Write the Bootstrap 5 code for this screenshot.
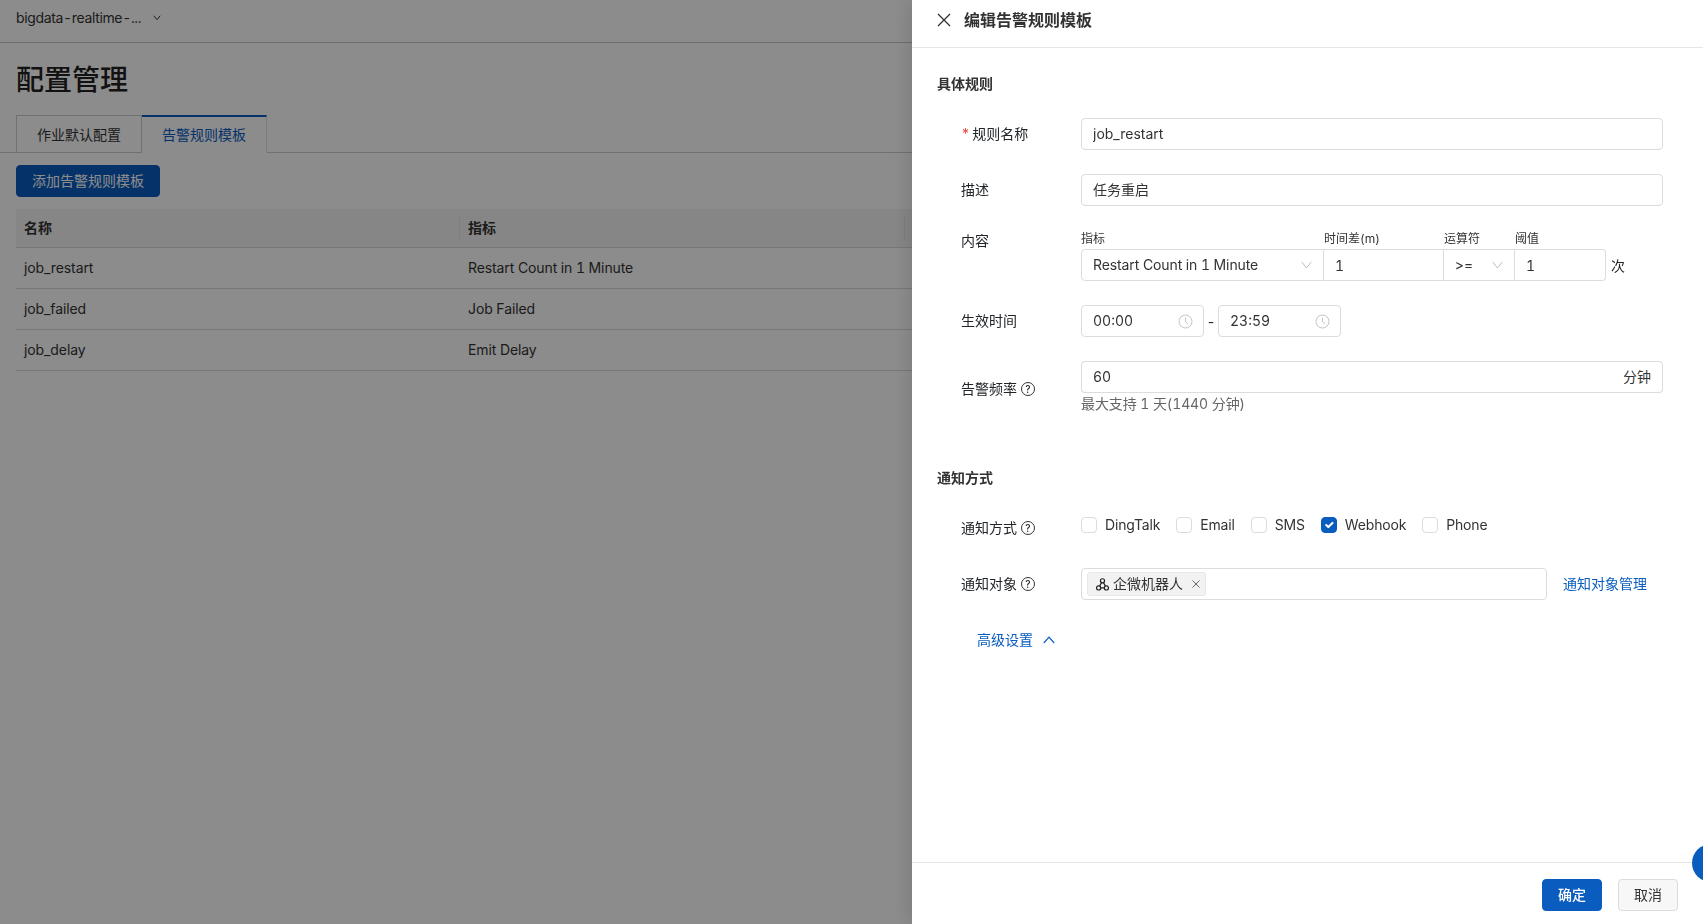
<!DOCTYPE html>
<html lang="zh">
<head>
<meta charset="utf-8">
<title>配置管理</title>
<link href="https://cdn.jsdelivr.net/npm/bootstrap@5.3.0/dist/css/bootstrap.min.css" rel="stylesheet">
<style>
html,body{height:100%;overflow:hidden}
body{font-family:Inter,"Noto Sans CJK SC",sans-serif;font-size:14px;color:#333;background:#fff;font-variant-numeric:tabular-nums}
.top-strip{height:43px;border-bottom:1px solid #c9c9c9;padding:7px 16px 0;line-height:22px}
.top-strip span{letter-spacing:-.35px}
.top-chev{margin:8px 0 0 12px}
.page-title{font-size:28px;line-height:40px;font-weight:500;margin:17px 16px 15px;color:#222}
.tab-strip{margin:0 0 12px;padding:0 0 0 16px;height:38px;border-bottom:1px solid #ccc;flex-wrap:nowrap}
.tab-strip .nav-link{height:38px;width:126px;padding:0;line-height:37px;text-align:center;border:1px solid #ccc;border-radius:0;color:#333;background:#fff;margin:0}
.tab-strip .nav-link.active{width:125px;border-top:2px solid #0a5cbf;border-bottom-color:#fff;color:#0a5cbf;border-left:0;line-height:35px}
.add-btn{display:block;margin-left:16px;height:32px;width:144px;padding:0;font-size:14px;line-height:30px;background:#0a5cbf;border-color:#0a5cbf;border-radius:4px}
.rule-table{margin:12px 0 0 16px;width:1687px;table-layout:fixed;--bs-table-color:#333;--bs-table-border-color:#d9d9d9}
.rule-table th{background:#f4f4f4;height:38px;padding:7px 0 8px 0;font-weight:600;border-bottom:1px solid #d9d9d9}
.th-inner{display:block;line-height:22px;padding-left:8px;border-right:1px solid #e6e6e6}
.rule-table td{height:41px;padding:0 8px;vertical-align:middle;border-bottom:1px solid #d9d9d9;letter-spacing:-.1px}
.page-scrim{position:fixed;inset:0;background:rgba(0,0,0,.45);z-index:1040}
.drawer{--bs-offcanvas-width:791px;box-shadow:-6px 0 16px rgba(0,0,0,.1);border-left:0!important}
.drawer-head{height:48px;padding:0 25px 7px;border-bottom:1px solid #e5e5e5;justify-content:flex-start;gap:13px}
.drawer-title{font-size:16px;line-height:24px;font-weight:600;color:#333;margin:0}
.drawer-x{width:14px;height:14px;display:block;flex:none}
.drawer-main{padding:25px 40px 0 25px;flex:1 1 auto;overflow:hidden}
.sec-title{font-size:14px;font-weight:600;line-height:22px;margin:0 0 23px;color:#333}
.form-line{display:flex;align-items:center;margin-bottom:24px;padding-left:24px}
.line-label{width:120px;flex:none;line-height:22px;display:flex;align-items:center;gap:4px}
.req-star{color:#e8453c;margin-right:-1.5px}
.hint-dot{width:14px;height:14px;border:1px solid #333;border-radius:50%;font-size:10px;line-height:12px;text-align:center;font-weight:500;flex:none}
.field-ctl{height:32px;padding:0 11px;font-size:14px;color:#333;border:1px solid #dcdcdc;border-radius:4px;background-color:#fff;box-shadow:none!important;line-height:30px;font-variant-numeric:tabular-nums}
input.top-input{padding-bottom:1px}
input.cn-input{padding-bottom:3px}
.field-wide{width:582px;flex:none}
.combo-head{display:flex;font-size:12px;line-height:16px;color:#333;height:18px}
.w-a{width:243px}.w-b{width:120px}.w-c{width:71px}.w-d{width:91px}
.combo-row{display:flex;align-items:center}
.combo-row .field-ctl{flex:none;border-radius:0;border-left:0}
.combo-row .field-ctl:first-child{border-radius:4px 0 0 4px;border-left:1px solid #dcdcdc}
.combo-row .field-ctl:nth-child(4){border-radius:0 4px 4px 0}
.field-pick{appearance:none;padding-right:26px;background-repeat:no-repeat;background-position:right 11px center;background-size:11px 8px;letter-spacing:-.1px;background-image:url("data:image/svg+xml,%3Csvg xmlns='http://www.w3.org/2000/svg' viewBox='0 0 11 8'%3E%3Cpath d='M.6.8 5.5 7 10.4.8' fill='none' stroke='%23bdbdbd' stroke-width='1'/%3E%3C/svg%3E")}
.combo-unit{margin-left:5px}
.time-box{width:123px;display:flex;align-items:center;justify-content:space-between;padding-right:10px}
.time-dash{width:14px;text-align:center}
.unit-addon{background:#fff;border:1px solid #dcdcdc;border-left:0;border-radius:0 4px 4px 0;padding:0 11px 2px 0;font-size:14px;color:#333}
.hint-line{color:#666;line-height:22px;height:24px;letter-spacing:-.1px}
.opt-list{display:flex;align-items:center;align-self:flex-start;margin-top:2px;height:22px}
.opt-item{display:flex;align-items:center;gap:8px;margin-right:16px;line-height:22px;color:#333;letter-spacing:-.17px}
.opt-item .form-check-input{width:16px;height:16px;margin:0;border:1px solid #dcdcdc;border-radius:4px;box-shadow:none;flex:none}
.opt-item .form-check-input:checked{background-color:#0a5cbf;border-color:#0a5cbf}
.target-box{width:466px;flex:none;display:flex;align-items:center;padding:0 5px}
.target-tag{display:flex;align-items:center;height:24px;background:#f2f2f2;border:1px solid #e8e8e8;border-radius:3px;padding:0 5px 0 8px;line-height:22px}
.tag-ico{width:13px;height:13px;margin-right:4px;flex:none}
.tag-x{width:8px;height:8px;margin-left:9px;flex:none}
.blue-link{color:#0a5cbf;text-decoration:none;line-height:22px}
.target-manage{margin-left:16px}
.more-row{padding-left:40px;height:32px;display:flex;align-items:center;gap:10px}
.up-ico{width:12px;height:8px}
.drawer-foot{height:62px;flex:none;border-top:1px solid #e5e5e5;padding:16px 25px 0 0;display:flex;justify-content:flex-end;gap:16px}
.foot-btn{width:60px;height:32px;padding:0;font-size:14px;line-height:30px;border-radius:4px}
.foot-ok{background:#0a5cbf;border-color:#0a5cbf;color:#fff;font-weight:500}
.foot-no{background:#f7f7f7;border-color:#dcdcdc;color:#333}
.help-orb{position:fixed;left:1692px;top:844px;width:38px;height:38px;border-radius:50%;background:#0a5cbf;z-index:1050}
</style>
</head>
<body>
<header class="top-strip d-flex align-items-start">
  <span>bigdata-realtime-...</span>
  <svg class="top-chev" width="8" height="6" viewBox="0 0 8 6"><path d="M.8.8 4 4.6 7.2.8" fill="none" stroke="#333" stroke-width="1"/></svg>
</header>
<main>
  <h1 class="page-title">配置管理</h1>
  <ul class="nav nav-tabs tab-strip">
    <li class="nav-item"><a class="nav-link" href="#">作业默认配置</a></li>
    <li class="nav-item"><a class="nav-link active" href="#">告警规则模板</a></li>
  </ul>
  <button class="btn btn-primary add-btn" type="button">添加告警规则模板</button>
  <table class="table rule-table">
    <colgroup><col style="width:444px"><col style="width:445px"><col></colgroup>
    <thead><tr><th><span class="th-inner">名称</span></th><th><span class="th-inner">指标</span></th><th><span class="th-inner">&nbsp;</span></th></tr></thead>
    <tbody>
      <tr><td>job_restart</td><td>Restart Count in 1 Minute</td><td></td></tr>
      <tr><td>job_failed</td><td>Job Failed</td><td></td></tr>
      <tr><td>job_delay</td><td>Emit Delay</td><td></td></tr>
    </tbody>
  </table>
</main>

<div class="page-scrim"></div>
<aside class="offcanvas offcanvas-end show drawer d-flex flex-column" data-bs-backdrop="false" data-bs-scroll="true" tabindex="-1">
  <div class="offcanvas-header drawer-head">
    <svg class="drawer-x" viewBox="0 0 14 14"><path d="M1 1l12 12M13 1 1 13" fill="none" stroke="#333" stroke-width="1.3"/></svg>
    <h2 class="drawer-title">编辑告警规则模板</h2>
  </div>
  <div class="drawer-main">
    <h3 class="sec-title">具体规则</h3>
    <div class="form-line">
      <label class="line-label"><span><span class="req-star">*</span> 规则名称</span></label>
      <input class="form-control field-ctl field-wide top-input" value="job_restart">
    </div>
    <div class="form-line">
      <label class="line-label">描述</label>
      <input class="form-control field-ctl field-wide cn-input" value="任务重启">
    </div>
    <div class="form-line align-items-start" style="margin-top:25px">
      <label class="line-label" style="line-height:20px">内容</label>
      <div>
        <div class="combo-head"><span class="w-a">指标</span><span class="w-b">时间差(m)</span><span class="w-c">运算符</span><span class="w-d">阈值</span></div>
        <div class="combo-row">
          <select class="form-select field-ctl field-pick w-a"><option>Restart Count in 1 Minute</option></select>
          <input class="form-control field-ctl w-b" value="1">
          <select class="form-select field-ctl field-pick w-c"><option>&gt;=</option></select>
          <input class="form-control field-ctl w-d" value="1">
          <span class="combo-unit">次</span>
        </div>
      </div>
    </div>
    <div class="form-line">
      <label class="line-label">生效时间</label>
      <div class="field-ctl time-box"><span>00:00</span><svg width="15" height="15" viewBox="0 0 15 15"><circle cx="7.5" cy="7.5" r="6.5" fill="none" stroke="#c4c4c4"/><path d="M7.5 3.6v4.2l2.4 2.2" fill="none" stroke="#c4c4c4"/></svg></div>
      <span class="time-dash">-</span>
      <div class="field-ctl time-box"><span>23:59</span><svg width="15" height="15" viewBox="0 0 15 15"><circle cx="7.5" cy="7.5" r="6.5" fill="none" stroke="#c4c4c4"/><path d="M7.5 3.6v4.2l2.4 2.2" fill="none" stroke="#c4c4c4"/></svg></div>
    </div>
    <div class="form-line" style="margin-bottom:50px">
      <label class="line-label">告警频率<span class="hint-dot">?</span></label>
      <div class="field-wide">
        <div class="input-group">
          <input class="form-control field-ctl border-end-0 top-input" value="60">
          <span class="input-group-text unit-addon">分钟</span>
        </div>
        <div class="hint-line">最大支持 1 天(1440 分钟)</div>
      </div>
    </div>
    <h3 class="sec-title">通知方式</h3>
    <div class="form-line">
      <label class="line-label" style="padding:5px 0">通知方式<span class="hint-dot">?</span></label>
      <div class="opt-list">
        <label class="opt-item"><input class="form-check-input" type="checkbox">DingTalk</label>
        <label class="opt-item"><input class="form-check-input" type="checkbox">Email</label>
        <label class="opt-item"><input class="form-check-input" type="checkbox">SMS</label>
        <label class="opt-item"><input class="form-check-input" type="checkbox" checked>Webhook</label>
        <label class="opt-item"><input class="form-check-input" type="checkbox">Phone</label>
      </div>
    </div>
    <div class="form-line">
      <label class="line-label">通知对象<span class="hint-dot">?</span></label>
      <div class="field-ctl target-box">
        <span class="target-tag">
          <svg class="tag-ico" viewBox="0 0 12 12"><g fill="none" stroke="#222" stroke-width="1.1"><circle cx="6" cy="2.6" r="1.9"/><circle cx="2.4" cy="9.2" r="1.9"/><circle cx="9.6" cy="9.2" r="1.9"/><path d="M5.1 4.3 3.3 7.5M6.9 4.3l1.8 3.2M4.3 9.2h3.4"/></g></svg>
          企微机器人
          <svg class="tag-x" viewBox="0 0 8 8"><path d="M.5.5l7 7M7.5.5l-7 7" stroke="#666" fill="none"/></svg>
        </span>
      </div>
      <a class="blue-link target-manage" href="#">通知对象管理</a>
    </div>
    <div class="more-row">
      <a class="blue-link" href="#">高级设置</a>
      <svg class="up-ico" viewBox="0 0 12 8"><path d="M.8 7 6 1.2 11.2 7" fill="none" stroke="#0a5cbf" stroke-width="1.2"/></svg>
    </div>
  </div>
  <div class="drawer-foot">
    <button class="btn foot-btn foot-ok" type="button">确定</button>
    <button class="btn foot-btn foot-no" type="button">取消</button>
  </div>
</aside>
<div class="help-orb"></div>
<script src="https://cdn.jsdelivr.net/npm/bootstrap@5.3.0/dist/js/bootstrap.bundle.min.js"></script>
</body>
</html>
